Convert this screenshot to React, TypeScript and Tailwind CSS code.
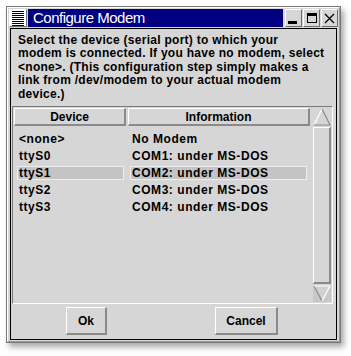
import React from "react";

const F = { fontFamily: '"Liberation Sans", Arial, sans-serif' };

function Raised({ className = "", children }: { className?: string; children?: React.ReactNode }) {
  return (
    <div className={"border-t border-l border-t-white border-l-white border-r-2 border-b-2 border-r-[#8a8a8a] border-b-[#8a8a8a] bg-[#d6d6d6] " + className}>
      {children}
    </div>
  );
}

function TitleBtn({ children }: { children: React.ReactNode }) {
  return (
    <div className="w-[17px] h-[18px] border-t border-l border-t-white border-l-white border-r border-b border-r-[#6e6e6e] border-b-[#6e6e6e] bg-[#d6d6d6] flex items-center justify-center">
      {children}
    </div>
  );
}

const rows = [
  ["<none>", "No Modem"],
  ["ttyS0", "COM1: under MS-DOS"],
  ["ttyS1", "COM2: under MS-DOS"],
  ["ttyS2", "COM3: under MS-DOS"],
  ["ttyS3", "COM4: under MS-DOS"],
];

const lines = [
  "Select the device (serial port) to which your",
  "modem is connected. If you have no modem, select",
  "<none>. (This configuration step simply makes a",
  "link from /dev/modem to your actual modem",
  "device.)",
];

export default function App() {
  return (
    <div className="w-[351px] h-[356px] bg-white pt-[6px] pl-[6px]" style={F}>
      <div className="w-[335px] h-[337px] border border-[#7a7a7a] shadow-[3px_4px_6px_rgba(0,0,0,0.35)] bg-[#d6d6d6]">
        <div className="h-full border-t border-l border-t-white border-l-white border-r border-b border-r-[#9a9a9a] border-b-[#9a9a9a] flex flex-col px-[1px] pt-[1px]">
          {/* title row */}
          <div className="h-[18px] flex gap-[1px]">
            <div className="w-[18px] h-[18px] border-t border-l border-t-white border-l-white border-r border-b border-r-[#6e6e6e] border-b-[#6e6e6e] bg-white flex flex-col justify-center gap-[1px] px-[2px]">
              {Array.from({ length: 8 }).map((_, i) => (
                <div key={i} className="h-[1px] bg-black" />
              ))}
            </div>
            <div className="flex-1 bg-[#000080] text-white text-[15px] leading-[18px] pl-[5px] tracking-[-0.5px]">Configure Modem</div>
            <div className="flex gap-[1px] pl-[1px]">
              <TitleBtn>
                <div className="w-[9px] h-[3px] bg-black mt-[8px] mr-[2px]" />
              </TitleBtn>
              <TitleBtn>
                <div className="w-[10px] h-[10px] border border-black border-t-[3px]" />
              </TitleBtn>
              <TitleBtn>
                <svg width="11" height="11" viewBox="0 0 11 11">
                  <path d="M1 1 L10 10 M10 1 L1 10" stroke="#000" strokeWidth="1.3" />
                </svg>
              </TitleBtn>
            </div>
          </div>
          {/* client */}
          <div className="mt-[1px] mx-[1px] mb-[1px] flex-1 border border-black flex flex-col">
            <div className="pl-[7px] pt-[5px] text-[12px] leading-[13.4px] font-bold text-black tracking-[0.27px]">
              {lines.map((l) => (
                <div key={l} className="whitespace-nowrap">{l}</div>
              ))}
            </div>
            {/* list */}
            <div className="mt-[5px] ml-[1px] mr-[3px] h-[198px] border-t border-l border-t-[#7a7a7a] border-l-[#7a7a7a] border-r border-b border-r-white border-b-white flex p-[1px]">
              <div className="flex-1 flex flex-col">
                <div className="flex gap-[2px] h-[18px]">
                  <Raised className="w-[112px] text-[12px] font-bold leading-[16px] text-center">Device</Raised>
                  <Raised className="w-[182px] text-[12px] font-bold leading-[16px] text-center">Information</Raised>
                </div>
                <div className="flex flex-col gap-[3px] mt-[6px]">
                  {rows.map(([d, info], i) => {
                    const sel = i === 2;
                    return (
                      <div key={d} className="flex h-[14px] text-[12px] font-bold leading-[12px] tracking-[0.55px]">
                        <div className={"ml-[3px] w-[107px] pl-[1px] " + (sel ? "bg-[#c4c4c4] border border-[#eeeeee]" : "border border-transparent")}>{d}</div>
                        <div className={"ml-[6px] w-[177px] pl-[1px] " + (sel ? "bg-[#c4c4c4] border border-[#eeeeee]" : "border border-transparent")}>{info}</div>
                      </div>
                    );
                  })}
                </div>
              </div>
              {/* scrollbar */}
              <div className="w-[18px] flex flex-col ml-[1px]">
                <svg width="18" height="18" viewBox="0 0 18 18">
                  <polygon points="9,1 17,17 1,17" fill="#d6d6d6" />
                  <path d="M1 17 L9 1" stroke="#ffffff" strokeWidth="1.2" />
                  <path d="M9 1 L17 17 L1 17" stroke="#8a8a8a" strokeWidth="1.2" fill="none" />
                </svg>
                <div className="flex-1 my-[1px] border-t border-l border-t-white border-l-white border-r-2 border-b-2 border-r-[#8a8a8a] border-b-[#8a8a8a] bg-[#d6d6d6]" />
                <svg width="18" height="17" viewBox="0 0 18 17">
                  <rect x="0" y="0" width="18" height="17" fill="#c8c8c8" />
                  <polygon points="1,1 17,1 9,16" fill="#d0d0d0" />
                  <path d="M1 1 L9 16" stroke="#8a8a8a" strokeWidth="1.2" />
                  <path d="M1 1 L17 1 M17 1 L9 16" stroke="#ffffff" strokeWidth="1.2" />
                </svg>
              </div>
            </div>
            {/* buttons */}
            <div className="flex mt-[3px] h-[28px]">
              <Raised className="ml-[55px] w-[41px] h-[28px] text-[12px] font-bold flex items-center justify-center">Ok</Raised>
              <Raised className="ml-[108px] w-[63px] h-[28px] text-[12px] font-bold flex items-center justify-center">Cancel</Raised>
            </div>
          </div>
        </div>
      </div>
    </div>
  );
}
